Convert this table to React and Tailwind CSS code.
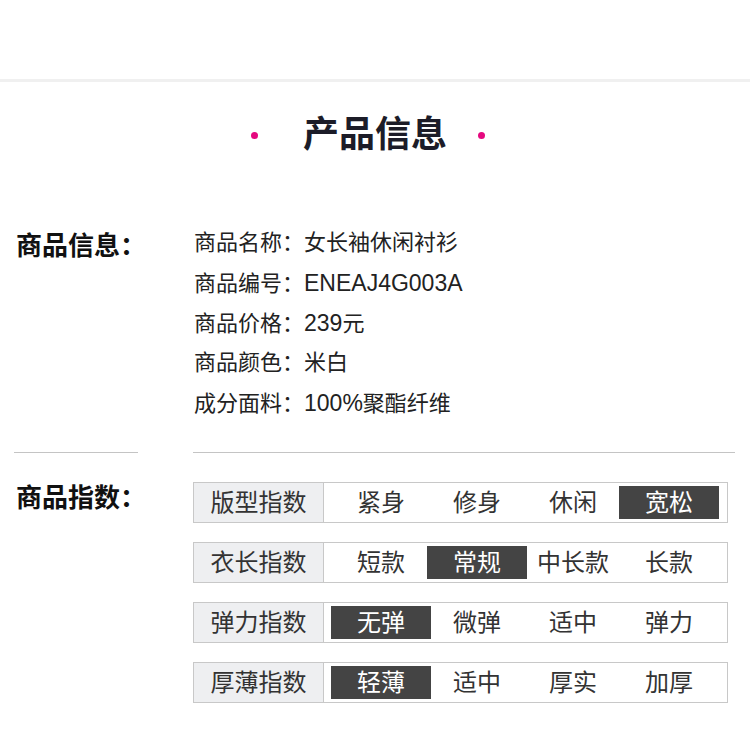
const infoLines = [
  ['商品名称：', <>女长袖休闲衬衫</>],
  ['商品编号：', <span className="text-[23px]">ENEAJ4G003A</span>],
  ['商品价格：', <><span className="text-[23px]">239</span>元</>],
  ['商品颜色：', <>米白</>],
  ['成分面料：', <><span className="text-[23px]">100%</span>聚酯纤维</>],
]

const indexRows = [
  { label: '版型指数', options: ['紧身', '修身', '休闲', '宽松'], active: 3 },
  { label: '衣长指数', options: ['短款', '常规', '中长款', '长款'], active: 1 },
  { label: '弹力指数', options: ['无弹', '微弹', '适中', '弹力'], active: 0 },
  { label: '厚薄指数', options: ['轻薄', '适中', '厚实', '加厚'], active: 0 },
]

function IndexRow({ row }) {
  return (
    <div className="flex h-[41px] w-[535px] border border-[#c8c8c8]">
      <div className="flex w-[130px] items-center justify-center border-r border-[#c8c8c8] bg-[#eeeff1] text-[24px] text-[#333]">
        {row.label}
      </div>
      <div className="flex items-center pl-[9px]">
        {row.options.map((option, i) => (
          <div className="flex w-[96px] justify-center" key={option}>
            {i === row.active ? (
              <div className="flex h-[33px] w-[100px] shrink-0 items-center justify-center bg-[#444] text-[24px] text-white">
                {option}
              </div>
            ) : (
              <span className="text-[24px] text-[#333]">{option}</span>
            )}
          </div>
        ))}
      </div>
    </div>
  )
}

export default function App() {
  return (
    <div className="h-[738px] w-[750px] overflow-hidden bg-white font-['Liberation_Sans','Noto_Sans_CJK_SC',sans-serif]">
      <div className="h-[79px]" />
      <div className="h-[3px] bg-[#f0f0f0]" />

      <div className="mt-[35px] flex items-center pl-[251px]">
        <span className="h-[7px] w-[7px] rounded-full bg-[#e5097f]" />
        <h1 className="ml-[45px] text-[36px] font-bold leading-[36px] text-[#1c1c28]">产品信息</h1>
        <span className="ml-[31px] h-[7px] w-[7px] rounded-full bg-[#e5097f]" />
      </div>

      <div className="mt-[70px] flex">
        <div className="w-[194px] pl-[16px] pt-[3px] text-[26px] font-bold leading-[40px] text-[#111]">
          商品信息：
        </div>
        <div className="text-[22px] leading-[40px] text-[#222]">
          {infoLines.map(([label, value]) => (
            <div className="h-[40px] overflow-hidden" key={label}>
              {label}
              {value}
            </div>
          ))}
        </div>
      </div>

      <div className="mt-[29px] flex">
        <div className="ml-[14px] h-px w-[124px] bg-[#c4c4c4]" />
        <div className="ml-[55px] h-px w-[542px] bg-[#c4c4c4]" />
      </div>

      <div className="mt-[29px] flex">
        <div className="w-[193px] pl-[16px] text-[26px] font-bold leading-[32px] text-[#111]">
          商品指数：
        </div>
        <div className="flex flex-col gap-[19px]">
          {indexRows.map((row) => (
            <IndexRow key={row.label} row={row} />
          ))}
        </div>
      </div>
    </div>
  )
}
